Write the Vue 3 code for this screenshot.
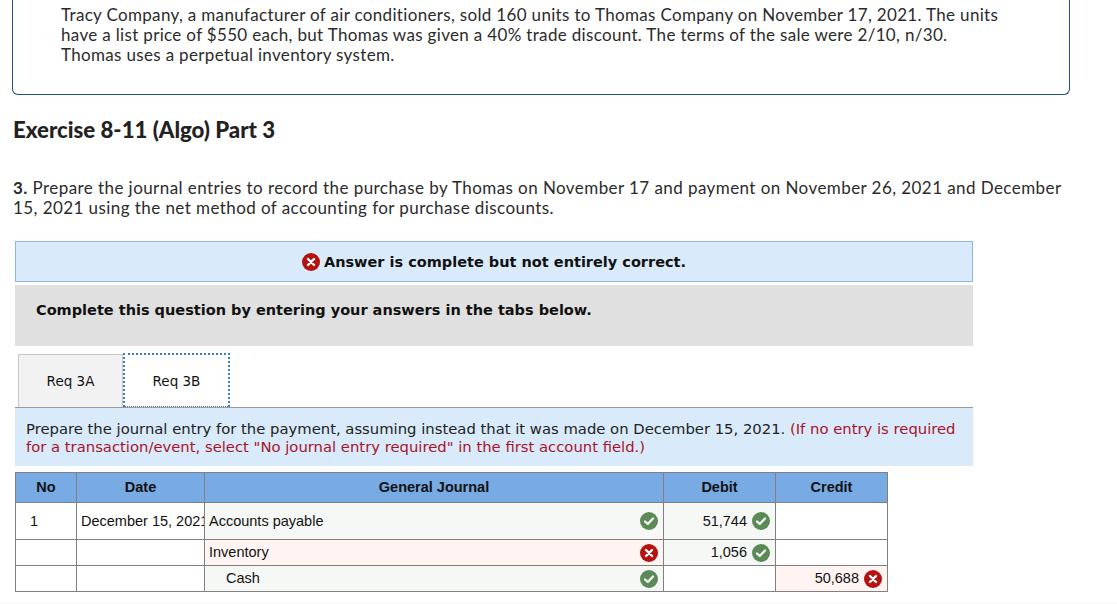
<script setup>
const rows = [
  { no: '1', date: 'December 15, 2021', account: 'Accounts payable', state: 'ok', debit: '51,744', debitState: 'ok', credit: '', creditState: '', cls: 'r1' },
  { no: '', date: '', account: 'Inventory', state: 'bad', debit: '1,056', debitState: 'ok', credit: '', creditState: '', cls: 'r2' },
  { no: '', date: '', account: 'Cash', state: 'ok', debit: '', debitState: '', credit: '50,688', creditState: 'bad', cls: 'r3', indent: true },
]
</script>

<template>
  <div class="page">
    <div class="card">
      <p>Tracy Company, a manufacturer of air conditioners, sold 160 units to Thomas Company on November 17, 2021. The units have a list price of $550 each, but Thomas was given a 40% trade discount. The terms of the sale were 2/10, n/30. Thomas uses a perpetual inventory system.</p>
    </div>
    <h2 class="title">Exercise 8-11 (Algo) Part 3</h2>
    <p class="question"><b>3.</b> Prepare the journal entries to record the purchase by Thomas on November 17 and payment on November 26, 2021 and December 15, 2021 using the net method of accounting for purchase discounts.</p>

    <div class="result">
      <svg class="ico" viewBox="0 0 18 18"><circle cx="9" cy="9" r="9" fill="#b5120f"/><path d="M6 6l6 6M12 6l-6 6" stroke="#fff" stroke-width="2.4" stroke-linecap="round"/></svg>
      <b>Answer is complete but not entirely correct.</b>
    </div>
    <div class="instruct">Complete this question by entering your answers in the tabs below.</div>

    <div class="tabs">
      <div class="tab inactive">Req 3A</div>
      <div class="tab active">Req 3B</div>
    </div>
    <div class="prompt">Prepare the journal entry for the payment, assuming instead that it was made on December 15, 2021. <span class="red">(If no entry is required for a transaction/event, select "No journal entry required" in the first account field.)</span></div>

    <div class="journal">
      <div class="cell head">No</div>
      <div class="cell head">Date</div>
      <div class="cell head">General Journal</div>
      <div class="cell head">Debit</div>
      <div class="cell head">Credit</div>
      <template v-for="row in rows" :key="row.account">
        <div class="cell no" :class="row.cls">{{ row.no }}</div>
        <div class="cell date" :class="row.cls"><span>{{ row.date }}</span></div>
        <div class="cell account" :class="[row.cls, row.state]">
          <span :class="{ indent: row.indent }">{{ row.account }}</span>
          <svg class="ico" viewBox="0 0 18 18">
            <circle cx="9" cy="9" r="9" :fill="row.state === 'ok' ? '#5b8a57' : '#b5120f'"/>
            <path v-if="row.state === 'ok'" d="M5 9.5l2.8 2.4L13 6.5" fill="none" stroke="#fff" stroke-width="2.2" stroke-linecap="round" stroke-linejoin="round"/>
            <path v-else d="M6 6l6 6M12 6l-6 6" stroke="#fff" stroke-width="2.4" stroke-linecap="round"/>
          </svg>
        </div>
        <div class="cell amount" :class="[row.cls, row.debitState]">
          <template v-if="row.debit">
            <span>{{ row.debit }}</span>
            <svg class="ico" viewBox="0 0 18 18"><circle cx="9" cy="9" r="9" fill="#5b8a57"/><path d="M5 9.5l2.8 2.4L13 6.5" fill="none" stroke="#fff" stroke-width="2.2" stroke-linecap="round" stroke-linejoin="round"/></svg>
          </template>
        </div>
        <div class="cell amount" :class="[row.cls, row.creditState]">
          <template v-if="row.credit">
            <span>{{ row.credit }}</span>
            <svg class="ico" viewBox="0 0 18 18"><circle cx="9" cy="9" r="9" fill="#b5120f"/><path d="M6 6l6 6M12 6l-6 6" stroke="#fff" stroke-width="2.4" stroke-linecap="round"/></svg>
          </template>
        </div>
      </template>
    </div>
    <div class="footer-line"></div>
  </div>
</template>

<style>
html, body { margin: 0; background: #fff; overflow: hidden; }
</style>

<style scoped>
.page {
  width: 1117px;
  height: 604px;
  overflow: hidden;
  position: relative;
  color: #2b2b2b;
  font-family: Lato, "Open Sans", sans-serif;
}
p { margin: 0; }
.card {
  box-sizing: border-box;
  width: 1058px;
  height: 95px;
  margin-left: 12px;
  padding: 5px 48px 0;
  border: 1px solid #1f4e8c;
  border-top: 0;
  border-radius: 0 0 6px 6px;
  font-size: 17px;
  line-height: 20px;
  letter-spacing: 0.33px;
}
.card p { width: 940px; }
.title {
  margin: 21px 0 0 13px;
  font-size: 22.2px;
  line-height: 28px;
  font-weight: 900;
  color: #222;
}
.question {
  margin: 34px 0 0 13px;
  width: 1056px;
  font-size: 17px;
  line-height: 20px;
  letter-spacing: 0.43px;
}
.result {
  box-sizing: border-box;
  width: 958px;
  height: 41px;
  margin: 23px 0 0 15px;
  display: flex;
  align-items: center;
  justify-content: center;
  gap: 4px;
  background: #d9ebfa;
  border: 1px solid #8db8e2;
  font-family: "DejaVu Sans", sans-serif;
  font-size: 14.5px;
  color: #111;
}
.instruct {
  box-sizing: border-box;
  width: 958px;
  height: 61px;
  margin: 3px 0 0 15px;
  padding: 17px 21px 0;
  background: #e0e0e0;
  font-family: "DejaVu Sans", sans-serif;
  font-size: 14.5px;
  font-weight: 700;
  color: #111;
}
.tabs {
  display: flex;
  height: 54px;
  margin: 7px 0 0 18px;
  align-items: stretch;
  font-family: "DejaVu Sans", sans-serif;
  font-size: 13.5px;
  color: #111;
}
.tab {
  box-sizing: border-box;
  display: flex;
  align-items: center;
  justify-content: center;
}
.inactive {
  width: 105px;
  margin-top: 1px;
  background: #f2f2f2;
  border: 1px solid #c8c8c8;
  border-bottom: 0;
}
.active {
  width: 107px;
  background: #fff;
  border: 2px dotted #3f7cc0;
  border-bottom-width: 1px;
}
.prompt {
  box-sizing: border-box;
  width: 958px;
  height: 59px;
  margin-left: 15px;
  padding: 12px 11px 0;
  background: #d9ebfa;
  border-top: 1px solid #9a9a9a;
  font-family: "DejaVu Sans", sans-serif;
  font-size: 14.8px;
  line-height: 18px;
  color: #222;
}
.red { color: #a8122a; }
.journal {
  box-sizing: border-box;
  display: grid;
  grid-template-columns: 61px 128px 459px 112px 112px;
  grid-template-rows: 30px 37px 26px 26px;
  width: 873px;
  margin: 6px 0 0 15px;
  border-top: 1px solid #808080;
  border-left: 1px solid #808080;
  font-family: "Liberation Sans", sans-serif;
  font-size: 14.5px;
  color: #111;
}
.cell {
  box-sizing: border-box;
  border-right: 1px solid #808080;
  border-bottom: 1px solid #808080;
  display: flex;
  align-items: center;
  min-width: 0;
  overflow: hidden;
}
.head {
  justify-content: center;
  background: #78abe4;
  font-weight: 700;
  padding-bottom: 2px;
}
.no { padding-left: 14px; }
.date { padding-left: 4px; white-space: nowrap; }
.account {
  padding: 0 5px 0 4px;
  justify-content: space-between;
}
.r2 span, .r3 span { position: relative; top: -1px; }
.indent { padding-left: 17px; }
.amount {
  padding-right: 5px;
  justify-content: flex-end;
  gap: 5px;
}
.ok { background: #f6f8f5; }
.bad { background: #fff4f2; }
.ico { width: 18px; height: 18px; flex: none; }
.footer-line {
  position: absolute;
  left: 0;
  right: 0;
  top: 603px;
  height: 1px;
  background: #f3f3f3;
}
</style>
